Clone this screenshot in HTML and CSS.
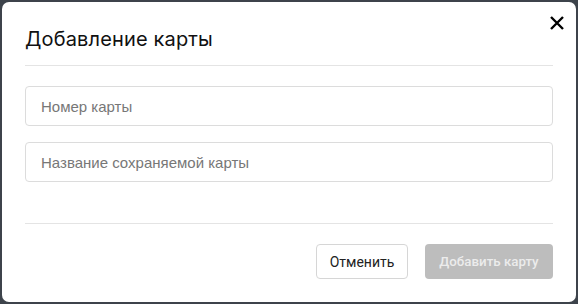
FILE: index.html
```html
<!DOCTYPE html>
<html lang="ru">
<head>
    <meta charset="UTF-8">
    <title>Добавление карты</title>
    <link rel="stylesheet" href="styles.css">
</head>
<body>
    <div class="modal">
        <button class="close" type="button" aria-label="Закрыть">
            <svg width="14" height="14" viewBox="0 0 14 14">
                <path d="M1 1 L13 13 M13 1 L1 13" stroke="#000" stroke-width="2.4" fill="none"/>
            </svg>
        </button>
        <div class="modal-header">
            <h1>Добавление карты</h1>
        </div>
        <form class="modal-body">
            <input type="text" class="field" placeholder="Номер карты">
            <input type="text" class="field" placeholder="Название сохраняемой карты">
        </form>
        <div class="modal-footer">
            <button type="button" class="btn btn-cancel">Отменить</button>
            <button type="button" class="btn btn-add" disabled>Добавить карту</button>
        </div>
    </div>
</body>
</html>
```

FILE: styles.css
```css
html, body {
    margin: 0;
    height: 100%;
}
body {
    background-color: #3d434b;
    padding: 2px;
    box-sizing: border-box;
    font-family: Inter, "Noto Sans", sans-serif;
}
.modal {
    position: relative;
    box-sizing: border-box;
    width: 574px;
    height: 300px;
    background: #fff;
    border-radius: 7px;
    padding: 0 23px;
}
.close {
    position: absolute;
    top: 14px;
    right: 12px;
    border: none;
    background: none;
    padding: 0;
    width: 14px;
    height: 14px;
    cursor: pointer;
}
.close svg {
    display: block;
}
.modal-header {
    height: 64px;
    border-bottom: 1px solid #e4e4e4;
    box-sizing: border-box;
    padding-top: 25px;
}
h1 {
    margin: 0;
    font-size: 20px;
    font-weight: 400;
    line-height: 24px;
    letter-spacing: 0.15px;
    color: #111;
}
.modal-body {
    display: flex;
    flex-direction: column;
    gap: 16px;
    padding: 20px 0 41px;
    border-bottom: 1px solid #e4e4e4;
}
.field {
    height: 40px;
    box-sizing: border-box;
    border: 1px solid #dcdcdc;
    border-radius: 4px;
    padding: 0 15px;
    font-family: "Liberation Sans", Arial, sans-serif;
    font-size: 15px;
    color: #333;
    outline: none;
}
.field::placeholder {
    color: #777;
}
.modal-footer {
    display: flex;
    justify-content: flex-end;
    gap: 17px;
    padding-top: 20px;
}
.btn {
    height: 35px;
    border-radius: 4px;
    font-family: Roboto, "Liberation Sans", sans-serif;
    font-size: 14px;
    cursor: pointer;
}
.btn-cancel {
    width: 92px;
    background: #fff;
    border: 1px solid #d6d6d6;
    color: #222;
}
.btn-add {
    width: 128px;
    background: #bdbdbd;
    border: none;
    color: #ececec;
    font-size: 13.3px;
    font-weight: 500;
}
```
